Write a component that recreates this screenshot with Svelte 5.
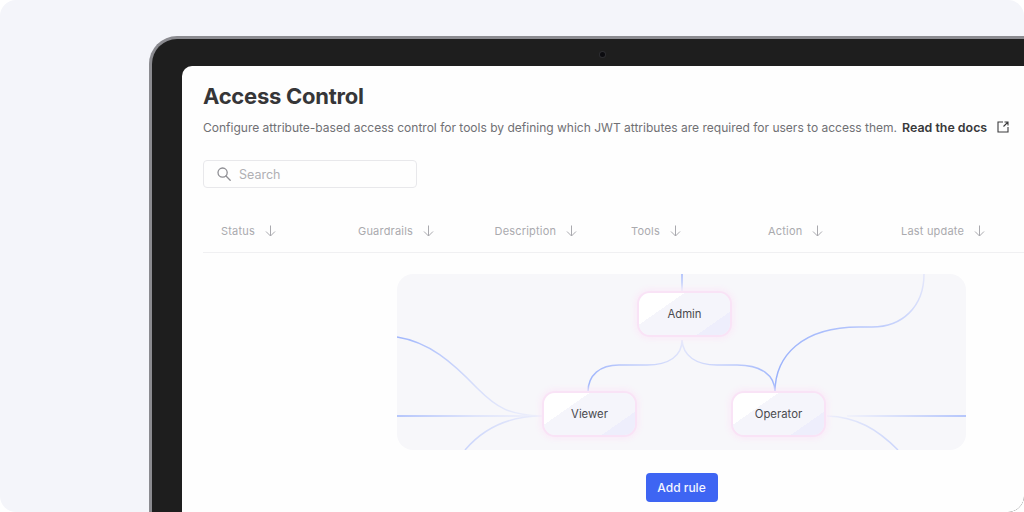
<script lang="ts">
	const columns = ['Status', 'Guardrails', 'Description', 'Tools', 'Action', 'Last update'];

	// wires of the role diagram, in canvas coordinates (canvas is 569 x 176)
	const wires = [
		{ d: 'M285 0V18', grad: 'fadeDown' },
		{ d: 'M285 66C285 82 272 91 250 91H222C203 91 191 101 191 118', grad: 'leftArc' },
		{ d: 'M285 66C286 82 299 91 320 91H340C364 91 378 101 378 118', grad: 'rightArc' },
		{ d: 'M378 118C378 82 405 53 462 53H475C505 53 527 33 527 0', grad: 'operatorUp' },
		{ d: 'M0 63C32 68 55 88 80 114C100 134 112 141 145 142', grad: 'fromLeft' },
		{ d: 'M0 142H145', grad: 'fromLeft' },
		{ d: 'M68 176C85 156 110 142 145 142', grad: 'fromLeftLow' },
		{ d: 'M430 142C460 143 480 155 501 176', grad: 'toRightLow' },
		{ d: 'M450 142H569', grad: 'toRight' }
	];

	const nodes = [
		{ label: 'Admin', x: 242, y: 19 },
		{ label: 'Viewer', x: 147, y: 119 },
		{ label: 'Operator', x: 336, y: 119 }
	];
</script>

<div class="page">
	<div class="bezel">
		<span class="camera"></span>
		<main class="screen">
			<h1>Access Control</h1>
			<div class="intro">
				<p>Configure attribute-based access control for tools by defining which JWT attributes are required for users to access them.</p>
				<a href="#docs">Read the docs</a>
				<svg class="ext" viewBox="0 0 12 12" width="12" height="12" fill="none" stroke="#3a3a3c" stroke-width="1.1">
					<path d="M6 1H1V11H11V6" />
					<path d="M6.5 5.5L11 1M7.5 1H11V4.5" />
				</svg>
			</div>

			<label class="search">
				<svg viewBox="0 0 14 14" width="14" height="14" fill="none" stroke="#8e8e93" stroke-width="1.3">
					<circle cx="5.6" cy="5.6" r="4.6" />
					<path d="M9 9L13.2 13.2" stroke-linecap="round" />
				</svg>
				<span>Search</span>
			</label>

			<div class="thead">
				{#each columns as col}
					<div class="th">
						<span>{col}</span>
						<svg viewBox="0 0 11 12" width="11" height="12" fill="none" stroke="#a9a9ae" stroke-width="1">
							<path d="M5.5 0.5V11M1 6.5L5.5 11L10 6.5" />
						</svg>
					</div>
				{/each}
			</div>

			<div class="empty">
				<div class="canvas">
					<svg class="wires" viewBox="0 0 569 176" width="569" height="176" fill="none">
						<defs>
							<linearGradient id="fadeDown" gradientUnits="userSpaceOnUse" x1="0" y1="0" x2="0" y2="18">
								<stop offset="0" stop-color="#a0b6fc" />
								<stop offset="1" stop-color="#dfe4fb" />
							</linearGradient>
							<linearGradient id="leftArc" gradientUnits="userSpaceOnUse" x1="285" y1="66" x2="191" y2="118">
								<stop offset="0" stop-color="#e4e7fb" />
								<stop offset="1" stop-color="#9db4fc" />
							</linearGradient>
							<linearGradient id="rightArc" gradientUnits="userSpaceOnUse" x1="285" y1="66" x2="378" y2="118">
								<stop offset="0" stop-color="#e4e7fb" />
								<stop offset="1" stop-color="#9db4fc" />
							</linearGradient>
							<linearGradient id="operatorUp" gradientUnits="userSpaceOnUse" x1="378" y1="118" x2="527" y2="0">
								<stop offset="0" stop-color="#98b0fc" />
								<stop offset="0.5" stop-color="#b0c2fc" />
								<stop offset="1" stop-color="#e4e7fb" />
							</linearGradient>
							<linearGradient id="fromLeft" gradientUnits="userSpaceOnUse" x1="0" y1="0" x2="145" y2="0">
								<stop offset="0" stop-color="#a0b6fc" />
								<stop offset="0.55" stop-color="#d8dffb" />
								<stop offset="1" stop-color="#f0f1fb" />
							</linearGradient>
							<linearGradient id="fromLeftLow" gradientUnits="userSpaceOnUse" x1="68" y1="0" x2="145" y2="0">
								<stop offset="0" stop-color="#ccd6fb" />
								<stop offset="1" stop-color="#eceefb" />
							</linearGradient>
							<linearGradient id="toRightLow" gradientUnits="userSpaceOnUse" x1="430" y1="0" x2="501" y2="0">
								<stop offset="0" stop-color="#eceefb" />
								<stop offset="1" stop-color="#ccd6fb" />
							</linearGradient>
							<linearGradient id="toRight" gradientUnits="userSpaceOnUse" x1="450" y1="0" x2="569" y2="0">
								<stop offset="0" stop-color="#f0f1fb" />
								<stop offset="1" stop-color="#a0b6fc" />
							</linearGradient>
						</defs>
						{#each wires as wire}
							<path d={wire.d} stroke={`url(#${wire.grad})`} stroke-width="1.5" />
						{/each}
					</svg>
					{#each nodes as node}
						<div class="node" style="left:{node.x}px;top:{node.y}px">{node.label}</div>
					{/each}
				</div>
				<button type="button">Add rule</button>
			</div>
		</main>
	</div>
</div>

<style>
	:global(body) {
		background: #fff;
		overflow: hidden;
	}

	.page {
		width: 1024px;
		height: 512px;
		box-sizing: border-box;
		padding: 36px 0 0 149px;
		background: #f4f5fa;
		border-radius: 16px;
		overflow: hidden;
		font-family: Inter, 'Liberation Sans', sans-serif;
	}

	.bezel {
		position: relative;
		height: 100%;
		box-sizing: border-box;
		padding: 27px 0 0 30px;
		background: #1e1e1e;
		border: solid #8b8b90;
		border-width: 3px 0 0 3px;
		border-radius: 28px 0 0 0;
	}

	.camera {
		position: absolute;
		left: 448px;
		top: 13px;
		width: 5px;
		height: 5px;
		border-radius: 50%;
		background: #0b0b0f;
		box-shadow: 0 0 0 1px #2c2c30;
	}

	.screen {
		height: 100%;
		box-sizing: border-box;
		padding: 16px 0 0 21px;
		background: #fefefe;
		border-radius: 10px 0 0 0;
		overflow: hidden;
	}

	h1 {
		margin: 0;
		font-size: 22px;
		line-height: 28px;
		font-weight: 700;
		letter-spacing: -0.25px;
		color: #363638;
	}

	.intro {
		display: flex;
		align-items: center;
		margin-top: 8px;
		height: 18px;
		white-space: nowrap;
	}

	.intro p {
		margin: 0;
		font-size: 12.03px;
		color: #707074;
	}

	.intro a {
		margin-left: 5px;
		font-size: 12.4px;
		font-weight: 600;
		color: #38383a;
		text-decoration: none;
	}

	.ext {
		margin-left: 10px;
	}

	.search {
		display: flex;
		align-items: center;
		gap: 8px;
		box-sizing: border-box;
		width: 214px;
		height: 28px;
		margin-top: 24px;
		padding-left: 13px;
		border: 1px solid #e8e8eb;
		border-radius: 4px;
		font-size: 12.5px;
		color: #b0b0b4;
	}

	.thead {
		display: grid;
		grid-template-columns: 137px 136.5px 136.5px 137px 133px 1fr;
		height: 43px;
		margin-top: 21px;
		padding-left: 18px;
		border-bottom: 1px solid #f0f0f2;
		font-size: 11px;
		letter-spacing: 0.2px;
		color: #aaaaae;
		white-space: nowrap;
	}

	.th {
		display: flex;
		align-items: center;
		gap: 10px;
	}

	.empty {
		display: flex;
		flex-direction: column;
		align-items: center;
		width: 957px;
		padding-top: 21px;
	}

	.canvas {
		position: relative;
		flex: none;
		width: 569px;
		height: 176px;
		background: #f7f7fa;
		border-radius: 16px;
		overflow: hidden;
	}

	.wires {
		display: block;
	}

	.node {
		position: absolute;
		display: flex;
		align-items: center;
		justify-content: center;
		box-sizing: border-box;
		width: 91px;
		height: 42px;
		border-radius: 11px;
		background: linear-gradient(145deg, #fff 0 30%, #f5f5fb 30% 78%, #eeeefc 78%);
		box-shadow: 0 0 0 2px #f9e3f6, 0 0 6px 4px #faebf8;
		font-size: 11.3px;
		font-weight: 400;
		color: #4a4a4e;
	}

	button {
		flex: none;
		width: 72px;
		height: 29px;
		margin-top: 23px;
		padding: 0;
		border: 0;
		border-radius: 4px;
		background: #3e65f3;
		color: #f4f6ff;
		font: 500 12px Inter, 'Liberation Sans', sans-serif;
	}
</style>
